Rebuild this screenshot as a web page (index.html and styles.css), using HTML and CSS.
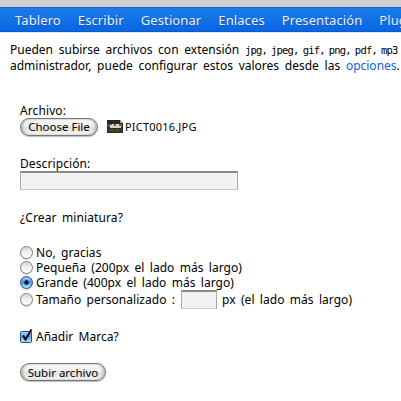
FILE: index.html
```html
<!DOCTYPE html>
<html lang="es">
<head>
<meta charset="utf-8">
<title>Subir archivo</title>
<link rel="stylesheet" href="styles.css">
</head>
<body>
<div class="topbar"></div>
<nav class="menu">
<a>Tablero</a><a>Escribir</a><a>Gestionar</a><a>Enlaces</a><a>Presentación</a><a>Plugins</a>
</nav>
<main>
<div class="intro">
<p class="line">Pueden subirse archivos con extensión <code>jpg, jpeg, gif, png, pdf, mp3</code></p>
<p class="line">administrador, puede configurar estos valores desde las <a>opciones</a>.</p>
</div>
<form class="upload">
<div class="label">Archivo:</div>
<div class="file">
<span class="button choose">Choose File</span>
<svg class="thumb" width="17" height="13" viewBox="0 0 17 13"><path d="M0 0H13L16 3V13H0Z" fill="#302d27"/><path d="M0 0H13V3H0Z" fill="#252723"/><path d="M1 4H15V7H1Z" fill="#615d51"/><path d="M3 5H5V4H7V6H9V4H12V6H14V8H3Z" fill="#d5d1ca"/><path d="M1 9H15V12H1Z" fill="#3a3d20"/><path d="M3 10H6M9 10H12" stroke="#61602f"/><path d="M13 0V3H16Z" fill="#aaa"/></svg>
<span class="filename">PICT0016.JPG</span>
</div>
<div class="label desc">Descripción:</div>
<div class="field"></div>
<div class="label thumbs">¿Crear miniatura?</div>
<div class="options">
<div class="option"><i class="radio"></i><span>No, gracias</span></div>
<div class="option"><i class="radio"></i><span>Pequeña (200px el lado más largo)</span></div>
<div class="option"><i class="radio on"></i><span>Grande (400px el lado más largo)</span></div>
<div class="option custom"><i class="radio"></i><span>Tamaño personalizado :</span><i class="field small"></i><span>px (el lado más largo)</span></div>
</div>
<div class="mark">
<svg width="14" height="14" viewBox="0 0 14 14"><defs><linearGradient id="g" x2="0" y2="1"><stop offset="0" stop-color="#b9d5f5"/><stop offset=".45" stop-color="#5fa0e6"/><stop offset="1" stop-color="#b4eeff"/></linearGradient></defs><rect x=".5" y="2.5" width="11" height="11" rx="1" fill="url(#g)" stroke="#2c4a84"/><path d="M3 6.5L5.5 10.5L11.5 .5" fill="none" stroke="#0a0a14" stroke-width="2"/></svg>
<span>Añadir Marca?</span>
</div>
<span class="button submit">Subir archivo</span>
</form>
</main>
</body>
</html>
```
FILE: styles.css
```css
* { box-sizing: border-box; }
body {
  margin: 0;
  width: 401px;
  height: 401px;
  overflow: hidden;
  background: #fff;
  color: #000;
  font: 12px/15px "Noto Sans", "Open Sans", sans-serif;
}
.topbar { height: 7px; background: #cfcfcf; }
.menu {
  display: flex;
  gap: 17px;
  height: 25px;
  padding-left: 15px;
  background: linear-gradient(#1c7ce8, #0866e4);
  border-top: 1px solid #1668c8;
  border-bottom: 1px solid #0759d0;
  box-shadow: 0 1px 0 #dcebfa;
  color: #e4effc;
  font-size: 13px;
  line-height: 25px;
  letter-spacing: .1px;
  text-shadow: 0 1px 1px #2555a0;
  white-space: nowrap;
}
.intro { padding: 10px 0 0 10px; white-space: nowrap; }
.line { margin: 0; height: 16px; line-height: 16px; word-spacing: 2.6px; }
.line a { color: #0c62e0; }
.line code { font: 10.5px "DejaVu Sans Mono", monospace; letter-spacing: -.8px; word-spacing: -1.5px; }
.upload { padding: 29px 0 0 20px; white-space: nowrap; word-spacing: 2.2px; }
.label { height: 15px; letter-spacing: .1px; }
.file { display: flex; height: 19px; align-items: center; padding-bottom: 2px; }
.button {
  display: flex;
  align-items: center;
  justify-content: center;
  height: 18px;
  border: 1px solid #777;
  border-radius: 9px;
  background: linear-gradient(#fcfcfc, #eee 45%, #dedede 55%, #fafafa);
  box-shadow: 0 1px 1px #bbb, inset 2px 0 2px #bbb, inset -2px 0 2px #bbb;
  font-size: 11.5px;
  word-spacing: 0;
}
.choose { width: 78px; }
.submit { width: 86px; margin-top: 19px; }
.thumb { margin: 0 1px 0 9px; }
.filename { font-size: 11px; letter-spacing: .2px; }
.desc { margin-top: 19px; }
.field {
  width: 218px;
  height: 19px;
  background: #f2f2f2;
  border: 1px solid #aaa;
  border-top: 2px solid #8a8a8a;
  border-bottom-color: #ccc;
}
.thumbs { margin-top: 20px; }
.options { margin-top: 20px; }
.option { display: flex; align-items: center; height: 15px; letter-spacing: .03px; }
.custom { height: 19px; }
.small { width: 36px; margin: 0 5px 0 6px; }
.radio {
  width: 13px;
  height: 13px;
  margin-right: 3px;
  border: 1px solid #808080;
  border-radius: 50%;
  background: linear-gradient(#d4d4d4, #f2f2f2 50%, #fff);
  box-shadow: 0 1px 1px #ccc;
}
.radio.on {
  border-color: #30488c;
  background: radial-gradient(circle at 50% 50%, #081030 0 1.8px, transparent 2.6px), linear-gradient(#a8c8f4, #4b94ea 50%, #aef0ff);
}
.mark { display: flex; align-items: center; height: 15px; margin-top: 20px; }
.mark svg { margin: -2px 2px 0 0; }
```
